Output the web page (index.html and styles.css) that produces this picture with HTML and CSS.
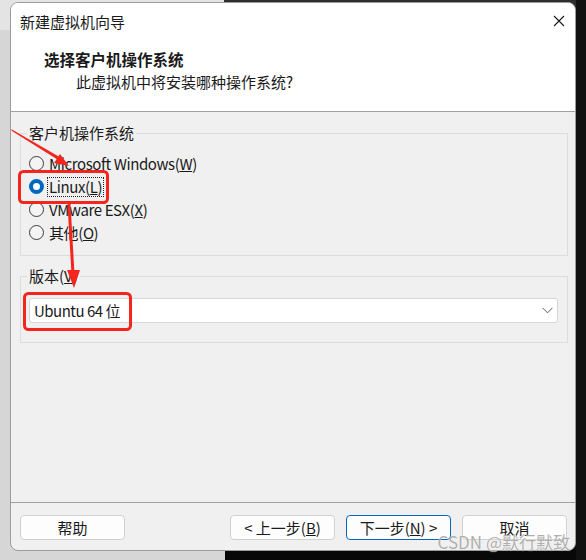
FILE: index.html
```html
<!DOCTYPE html>
<html lang="zh-CN">
<head>
<meta charset="utf-8">
<title>新建虚拟机向导</title>
<link rel="stylesheet" href="styles.css">
</head>
<body>
<div class="stage">
  <div class="window">
    <div class="header">
      <div class="titlebar">
        <span class="title">新建虚拟机向导</span>
        <svg class="close" width="12" height="12" viewBox="0 0 12 12"><path d="M1 1L11 11M11 1L1 11" stroke="#1a1a1a" stroke-width="1.1" fill="none"/></svg>
      </div>
      <div class="heading">选择客户机操作系统</div>
      <div class="sub">此虚拟机中将安装哪种操作系统?</div>
    </div>
    <div class="body">
      <fieldset class="group group-os">
        <legend>客户机操作系统</legend>
        <label class="radio"><span class="dot"></span><span class="rtext">Microsoft Windows(<u>W</u>)</span></label>
        <label class="radio"><span class="dot checked"></span><span class="rtext focus">Linux(<u>L</u>)</span></label>
        <label class="radio"><span class="dot"></span><span class="rtext">VMware ESX(<u>X</u>)</span></label>
        <label class="radio"><span class="dot"></span><span class="rtext">其他(<u>O</u>)</span></label>
      </fieldset>
      <fieldset class="group group-ver">
        <legend>版本(<u>V</u>)</legend>
        <div class="combo">
          <span class="ctext">Ubuntu 64 位</span>
          <svg class="chev" width="11" height="7" viewBox="0 0 11 7"><path d="M0.5 0.8L5.5 5.8L10.5 0.8" stroke="#555" stroke-width="1" fill="none"/></svg>
        </div>
      </fieldset>
    </div>
    <div class="footer">
      <button class="btn">帮助</button>
      <div class="spacer"></div>
      <button class="btn">&lt; 上一步(<u>B</u>)</button>
      <button class="btn primary">下一步(<u>N</u>) &gt;</button>
      <button class="btn">取消</button>
    </div>
  </div>
  <svg class="annot" width="586" height="560" viewBox="0 0 586 560">
    <rect x="19.5" y="171.5" width="88" height="31" rx="4" fill="none" stroke="#f3251c" stroke-width="3"/>
    <rect x="24.5" y="293.5" width="106" height="36" rx="4" fill="none" stroke="#f3251c" stroke-width="3"/>
    <polygon points="11,129 12,131 59,160.5 60.5,157.5" fill="#f3251c"/>
    <polygon points="69,166 54,163 60,154" fill="#f3251c"/>
    <path d="M69 204 L73 274" stroke="#f3251c" stroke-width="3" fill="none"/>
    <polygon points="74,288 67,270 80,270" fill="#f3251c"/>
  </svg>
  <div class="watermark">CSDN @默行默致</div>
</div>
</body>
</html>
```

FILE: styles.css
```css
* { box-sizing: border-box; }
html, body { margin: 0; padding: 0; }
body {
  width: 586px;
  height: 560px;
  overflow: hidden;
  font-family: "Noto Sans CJK SC", "Noto Sans", sans-serif;
  font-size: 15px;
  color: #1a1a1a;
}
.stage {
  position: relative;
  width: 586px;
  height: 560px;
  padding: 2px 0 0 10px;
  background:
    linear-gradient(to right, transparent 576px, #111 576px),
    linear-gradient(to right, #e4e4e4 0 224px, #2e2e2e 224px) top / 100% 30px no-repeat,
    linear-gradient(to right, #d6d6d6 0 225px, #080808 225px);
}
.window {
  width: 566px;
  height: 549px;
  border: 1px solid #9c9c9c;
  border-radius: 8px;
  overflow: hidden;
  background: #f0f0f0;
  display: flex;
  flex-direction: column;
}
.header {
  background: #fff;
  border-bottom: 1px solid #a0a0a0;
  padding: 0 0 18px 0;
}
.titlebar {
  height: 37px;
  display: flex;
  align-items: center;
  justify-content: space-between;
  padding: 0 10px 0 9px;
}
.title { font-size: 15px; line-height: 20px; }
.close { display: block; margin-top: -2px; }
.heading {
  margin-top: 8px;
  padding-left: 33px;
  font-weight: bold;
  font-size: 15.5px;
  line-height: 22px;
}
.sub {
  margin-top: 1px;
  padding-left: 65px;
  line-height: 22px;
}
.body {
  flex: 1;
  border-bottom: 1px solid #a0a0a0;
  display: flex;
  flex-direction: column;
}
.group {
  margin: 0 7px 0 9px;
  border: 1px solid #dcdcdc;
  min-width: 0;
}
.group legend {
  padding: 0 2px;
  line-height: 20px;
}
.group-os {
  margin-top: 11px;
  padding: 9px 6px 11px 6px;
}
.radio {
  display: flex;
  align-items: center;
  height: 23px;
}
.dot {
  width: 15px;
  height: 15px;
  margin-left: 2px;
  border-radius: 50%;
  border: 1px solid #3c3c3c;
  background: #f4f4f4;
  flex: none;
}
.dot.checked {
  border: 4.5px solid #0067c0;
  background: #fff;
}
.rtext {
  margin-left: 5px;
  line-height: 18px;
  letter-spacing: -0.4px;
}
.rtext.focus {
  outline: 1px dotted #222;
  outline-offset: 0;
  padding: 0 1px;
  margin-left: 4px;
}
.group-ver {
  margin-top: 10px;
  padding: 12px 9px 19px 8px;
}
.group-ver legend { margin-left: -2px; }
.combo {
  height: 25px;
  background: #fff;
  border: 1px solid #d6d6d6;
  border-radius: 3px;
  display: flex;
  align-items: center;
  justify-content: space-between;
  padding: 0 4px 0 4px;
}
.ctext { letter-spacing: -0.5px; }
.footer {
  height: 47px;
  display: flex;
  align-items: flex-start;
  padding: 12px 8px 0 9px;
  gap: 11px;
}
.spacer { flex: 1; }
.btn {
  width: 105px;
  height: 25px;
  font-family: inherit;
  font-size: 15px;
  color: #1a1a1a;
  background: #fdfdfd;
  border: 1px solid #d0d0d0;
  border-radius: 4px;
  padding: 0;
  line-height: 22px;
}
.btn.primary { border-color: #0067c0; }
.annot {
  position: absolute;
  left: 0;
  top: 0;
  pointer-events: none;
}
.watermark {
  position: absolute;
  right: 16px;
  top: 530px;
  font-size: 17px;
  line-height: 24px;
  color: rgba(150,150,150,0.75);
  text-shadow: 0 0 1px rgba(255,255,255,0.8);
}
```
